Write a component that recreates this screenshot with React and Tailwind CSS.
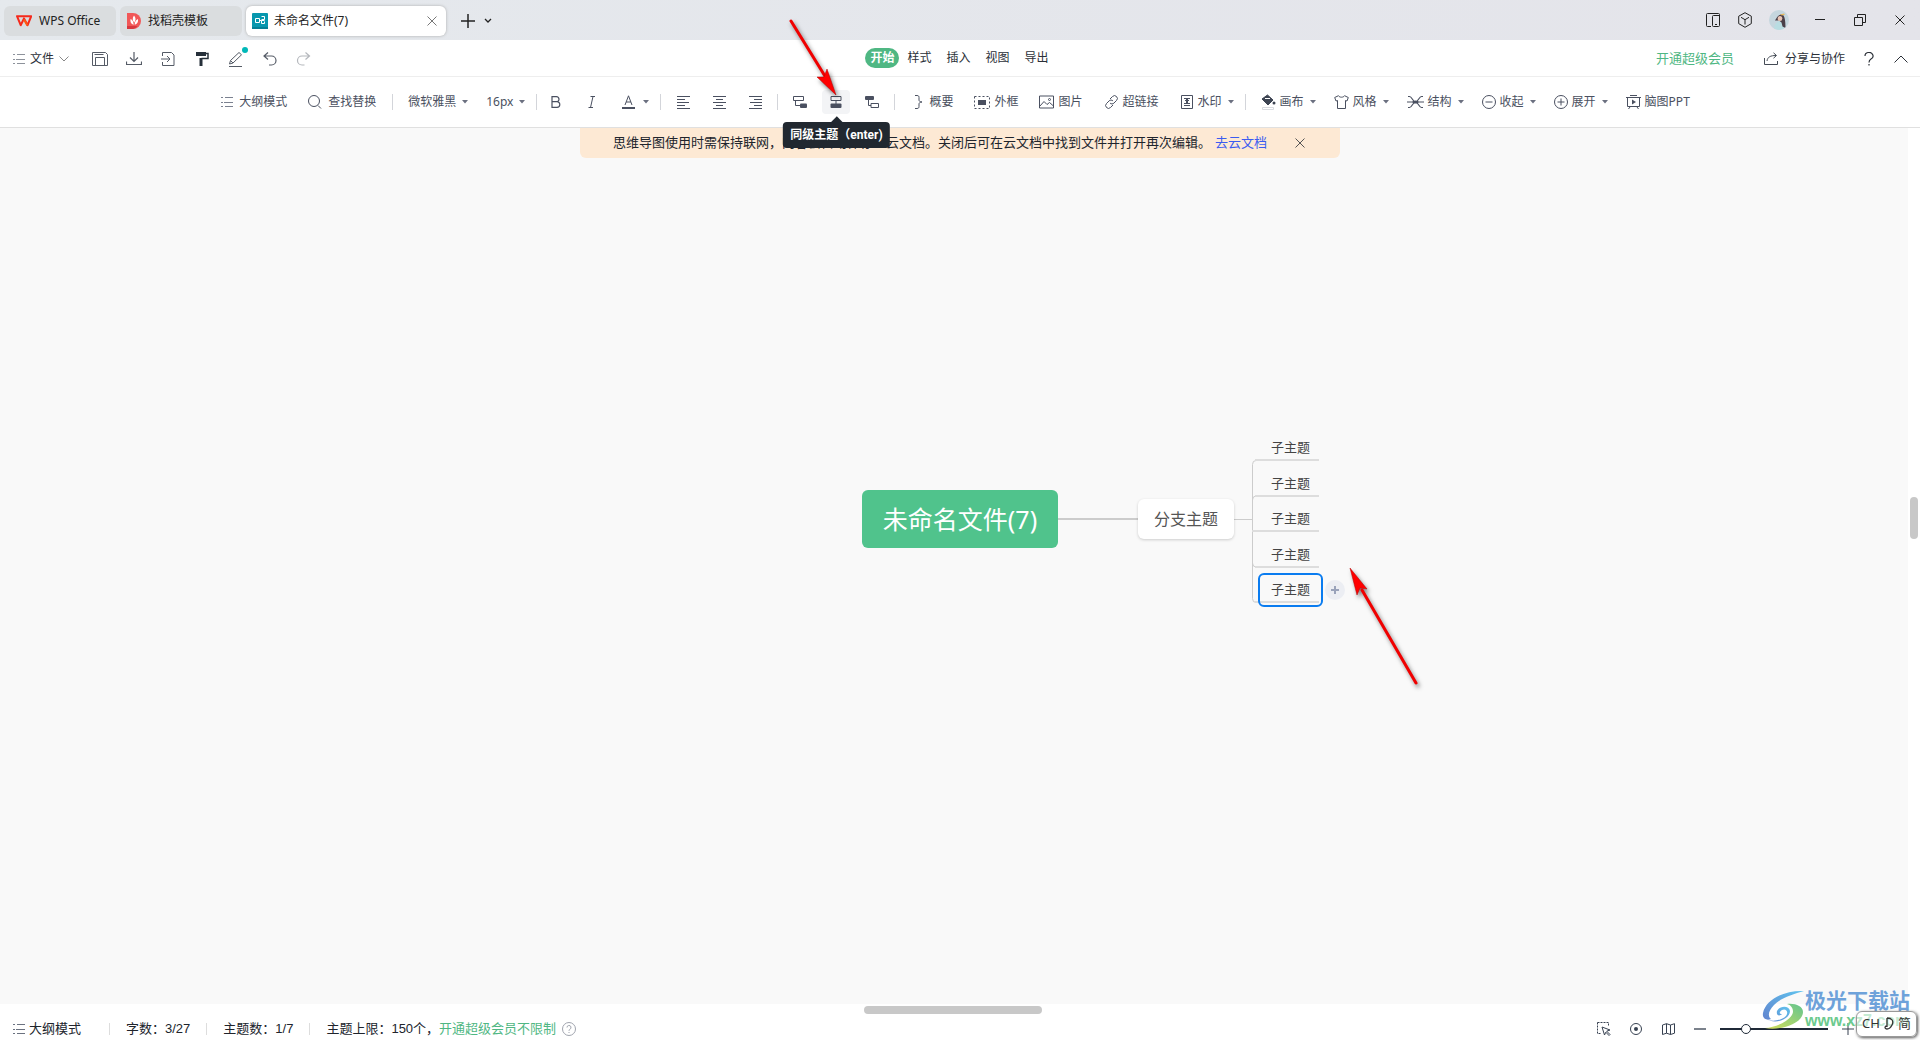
import React from 'react';

const Svg = ({ w = 16, h = 16, className = '', children }) => (
    <svg
        width={w}
        height={h}
        viewBox={`0 0 ${w} ${h}`}
        fill="none"
        stroke="currentColor"
        strokeWidth="1"
        aria-hidden="true"
        className={`shrink-0 ${className}`}
    >
        {children}
    </svg>
);

const ListIcon = ({ className }) => (
    <Svg w={12} h={12} className={className}>
        <path d="M0 1.5h2M4 1.5h8M0 6.5h2M3 6.5h9M0 10.5h2M4 10.5h8" />
    </Svg>
);

const Caret = () => (
    <Svg w={6} h={4} className="text-[#6b7080]">
        <path d="M0 0h6L3 3.5z" fill="currentColor" stroke="none" />
    </Svg>
);

const CloseIcon = ({ size = 10, className }) => (
    <Svg w={size} h={size} className={className}>
        <path d={`M.5 .5L${size - 0.5} ${size - 0.5}M${size - 0.5} .5L.5 ${size - 0.5}`} />
    </Svg>
);

// tight: follows a drop-down, whose caret already brings some space
const Divider = ({ tight }) => (
    <span className={`mr-[5px] h-4 w-px shrink-0 bg-[#d3d5da] ${tight ? 'ml-[3px]' : 'ml-[5px]'}`} />
);

const ToolButton = ({ icon, label, caret }) => (
    <button className={`flex h-6 shrink-0 items-center gap-1 pl-[10px] ${caret ? 'pr-2' : 'pr-[11px]'}`}>
        {icon}
        {label && <span>{label}</span>}
        {caret && <span className="pl-[2px]"><Caret /></span>}
    </button>
);

const IconButton = ({ label, active, children }) => (
    <button
        aria-label={label}
        className={`flex h-6 w-7 shrink-0 items-center justify-center rounded-sm ${active ? 'bg-[#f3f4f6]' : ''}`}
    >
        {children}
    </button>
);

const TitleBar = () => (
    <header className="flex h-10 items-center bg-linear-to-r from-[#e5e9ed] to-[#e4e4ea] pl-1 text-xs text-[#222]">
        <div className="flex items-center gap-1 pt-[2px]">
            <button className="flex h-[30px] w-28 items-center gap-[7px] rounded-md bg-[#dadddf] pl-3">
                <svg width="16" height="12" viewBox="0 0 16 12" aria-hidden="true">
                    <path d="M1 1.2h14.2L11.6 10.2 8 3.5 4.7 10.2 1 1.2z" fill="none" stroke="#f5291b" strokeWidth="2" strokeLinejoin="round" />
                    <path d="M8 4.5l3.4 6" stroke="#ff5b12" strokeWidth="2" />
                </svg>
                WPS Office
            </button>
            <button className="flex h-[30px] w-[122px] items-center gap-[7px] rounded-md bg-[#dadddf] pl-[7px]">
                <svg width="14" height="16" viewBox="0 0 14 16" aria-hidden="true">
                    <path d="M0 0h6a8 8 0 0 1 0 16H0z" fill="#f15757" />
                    <path d="M0 13h10.500a8 8 0 0 1-4.500 3H0z" fill="#d8383f" />
                    <path d="M7 2.500c2 2.500 2 4.500 .3 7c-2-2-2-4.500-.3-7zM3.500 6c2 1 3 2.500 3.200 5.800c-2.700-.8-3.700-2.800-3.200-5.800zM11 6c.5 3-.8 5-3.300 5.800c0-3 1-4.800 3.300-5.800z" fill="#fff" />
                </svg>
                找稻壳模板
            </button>
            <div className="flex h-[30px] w-[200px] items-center rounded-md bg-white pl-[6px] pr-[9px] shadow-[0_0_3px_#aaa]">
                <svg width="16" height="16" viewBox="0 0 16 16" aria-hidden="true">
                    <rect width="16" height="16" rx="1" fill="#0797ae" />
                    <path d="M0 14h16v2H0z" fill="#057f95" />
                    <path d="M3.500 5.500h4v4h-4zM7.500 7.500h2M9.500 3.500h3v3h-3M12.500 8.500v2h-3v-3h3" fill="none" stroke="#fff" />
                </svg>
                <span className="ml-[6px] flex-1">未命名文件(7)</span>
                <button aria-label="关闭标签"><CloseIcon className="text-[#777]" /></button>
            </div>
        </div>
        <button aria-label="新建" className="ml-[15px] pt-[2px]">
            <Svg w={14} h={14}><path d="M7 0v14M0 7h14" strokeWidth="1.500" /></Svg>
        </button>
        <button aria-label="标签列表" className="ml-[9px] pt-[2px]">
            <Svg w={8} h={6}><path d="M1 1l3 3 3-3" strokeWidth="1.300" /></Svg>
        </button>
        <div className="ml-auto flex items-center pr-[15px]">
            <button aria-label="分栏" className="mr-[18px]">
                <Svg w={14} h={14}>
                    <path d="M5 13.500H1.500a1 1 0 0 1-1-1v-11a1 1 0 0 1 1-1h11a1 1 0 0 1 1 1v11a1 1 0 0 1-1 1h-5a1 1 0 0 1-1-1v-9a1 1 0 0 1 1-1h6M9 11.500h2" />
                </Svg>
            </button>
            <button aria-label="应用" className="mr-[17px]">
                <Svg w={14} h={16}>
                    <path d="M7 .7l6.300 3.500v7.400L7 15.300.7 11.600V4.200zM3 5.300l4 2.400 4-2.400M7 7.700v4.800" />
                </Svg>
            </button>
            <button aria-label="账号" className="mr-[26px] size-5 overflow-hidden rounded-full">
                <svg width="20" height="20" viewBox="0 0 20 20">
                    <rect width="20" height="20" fill="#c5d6de" />
                    <path d="M5 20c0-5 3-9 7-9 3 0 3 5 3 9z" fill="#b9dde2" />
                    <path d="M6 10.500c2-3 3-6 7-6 3 1 3.500 7 3.500 13.500l-3-1.500-1-4-2.500-2z" fill="#4a3f48" />
                    <ellipse cx="11" cy="8.500" rx="2.300" ry="2.600" fill="#e8c4b4" />
                    <path d="M11 4.500l4-1 1 1-3 1z" fill="#e8b85a" />
                </svg>
            </button>
            <button aria-label="最小化" className="mr-[29px]"><Svg w={10} h={10}><path d="M0 4.500h10" /></Svg></button>
            <button aria-label="还原" className="mr-[29px]">
                <Svg w={12} h={12}><path d="M.5 3.500h8v8h-8zM3.500 3.500v-3h8v8h-3" /></Svg>
            </button>
            <button aria-label="关闭"><CloseIcon /></button>
        </div>
    </header>
);

const menus = ['样式', '插入', '视图', '导出'];

const MenuBar = () => (
    <div className="grid h-[37px] grid-cols-[1fr_auto_1fr] items-center border-b border-[#eeeeee] pl-[13px] pr-3 pt-[2px] text-xs text-[#2b3038]">
        <div className="flex items-center">
            <button className="flex items-center gap-[5px]">
                <ListIcon className="text-[#8d929b]" />
                文件
                <Svg w={10} h={6} className="text-[#888]"><path d="M.5 .5L5 5 9.500 .5" /></Svg>
            </button>
            <div className="ml-[23px] flex items-center gap-[18px] text-[#555b66]">
                <button aria-label="保存">
                    <Svg>
                        <path d="M.5 1.500h13l2 2v11H.5zM3.500 14.500v-8h9v8M2.500 3.500h9" />
                    </Svg>
                </button>
                <button aria-label="下载">
                    <Svg><path d="M8 1v9M4 6.500l4 4 4-4M.5 10.500v3h15v-3" strokeWidth="1.200" /></Svg>
                </button>
                <button aria-label="导入">
                    <Svg><path d="M2.500 5V1.500h9l2.500 2.500v10.500H2.500V11M1 8h9M7 5l3 3-3 3" /></Svg>
                </button>
                <button aria-label="格式刷" className="text-[#26303a]">
                    <Svg><path d="M12 2.500h2v5H7.500" strokeWidth="1.500" /><path d="M2 1h10v4H2zM5.500 7h3v8h-3z" fill="currentColor" stroke="none" /></Svg>
                </button>
                <button aria-label="画笔" className="relative">
                    <Svg><path d="M1.500 13l1-3.500L11 1.500l2.500 2.300L5 12zM2.500 9.500L5 12M1 15.500h13" /></Svg>
                    <span className="absolute -right-1 -top-1 size-[6px] rounded-full bg-[#00b8b8]" />
                </button>
                <button aria-label="撤销">
                    <Svg><path d="M6 1.500l-4 3.500 4 3.500M2 5h7.500a4 4 0 0 1 0 9H7" strokeWidth="1.200" /></Svg>
                </button>
                <button aria-label="重做" className="text-[#b4b7bc]">
                    <Svg><path d="M9.500 1.500l4 3.500-4 3.500M13.500 5H6a4 4 0 0 0 0 9h2.500" strokeWidth="1.200" /></Svg>
                </button>
            </div>
        </div>
        <nav className="flex items-center gap-px pb-[2px]">
            <button className="h-5 rounded-full bg-[#4fb783] px-[5px] font-bold text-white">开始</button>
            {menus.map((m) => (
                <button key={m} className="h-5 px-[7px]">{m}</button>
            ))}
        </nav>
        <div className="flex items-center justify-end">
            <a href="#vip" className="mr-[30px] text-[13px] text-[#4fb783]">开通超级会员</a>
            <button className="mr-[19px] flex items-center gap-[6px]">
                <Svg w={15} h={14} className="text-[#444b55]">
                    <path d="M.5 6v6.500h13V9M3 9c.5-4 3.500-5.500 9-5.500M9.500 .8l3 2.700-3 2.700" />
                </Svg>
                分享与协作
            </button>
            <button aria-label="帮助" className="mr-5">
                <Svg w={10} h={14}><path d="M1 4a4 3.500 0 1 1 6 3C5.500 8 5 8.500 5 10.500M5 12v1.500" strokeWidth="1.200" /></Svg>
            </button>
            <button aria-label="收起功能区">
                <Svg w={14} h={8}><path d="M.5 7.500L7 1l6.500 6.500" /></Svg>
            </button>
        </div>
    </div>
);

const AlignIcon = ({ d }) => <Svg w={13} h={13}><path d={d} /></Svg>;

const Toolbar = () => (
    <div className="flex h-[51px] items-center justify-center border-b border-[#e0e0e0] bg-white pr-2 text-xs text-[#4a5060]">
        <ToolButton icon={<span className="pr-[2px]"><ListIcon className="text-[#7b8190]" /></span>} label="大纲模式" />
        <ToolButton
            icon={<span className="pr-[2px]"><Svg w={14} h={14}><circle cx="6" cy="6" r="5.500" /><path d="M10 10.500l3 3" /></Svg></span>}
            label="查找替换"
        />
        <Divider />
        <ToolButton label="微软雅黑" caret />
        <ToolButton label="16px" caret />
        <Divider tight />
        <div className="flex gap-2">
            <IconButton label="加粗">
                <Svg w={10} h={12}><path d="M1 .7h4.500a2.500 2.500 0 0 1 0 5H1zM1 5.700h5a2.800 2.800 0 0 1 0 5.600H1z" strokeWidth="1.200" /></Svg>
            </IconButton>
            <IconButton label="倾斜">
                <Svg w={8} h={12}><path d="M2.500 .5H7M.5 11.500H5M5 .5L2.500 11.500" /></Svg>
            </IconButton>
            <button aria-label="字体颜色" className="flex h-6 items-center gap-2 pl-2 pr-[6px]">
                <Svg w={13} h={14}><path d="M3 10L6.500 .8 10 10M4.200 7h4.600" /><path d="M0 13h13" strokeWidth="2" /></Svg>
                <Caret />
            </button>
        </div>
        <Divider />
        <div className="flex gap-2 px-[3px]">
            <IconButton label="左对齐"><AlignIcon d="M0 .5h13M0 3.500h8M0 6.500h12M0 9.500h8M0 12.500h13" /></IconButton>
            <IconButton label="居中"><AlignIcon d="M0 .5h13M3 3.500h7M0 6.500h13M3 9.500h7M0 12.500h13" /></IconButton>
            <IconButton label="右对齐"><AlignIcon d="M0 .5h13M5 3.500h8M1 6.500h12M5 9.500h8M0 12.500h13" /></IconButton>
        </div>
        <Divider />
        <div className="flex gap-2 px-[3px]">
            <IconButton label="子主题">
                <Svg w={14} h={12}><path d="M.5 .5h10v4H.5zM2.500 4.500v5H7" /><rect x="7" y="7.500" width="7" height="4.500" rx="1" fill="currentColor" stroke="none" /></Svg>
            </IconButton>
            <div className="relative">
                <IconButton label="同级主题" active>
                    <Svg w={12} h={12}><path d="M1 .5h10v4H1zM6 4.500V8" /><rect y="7.500" width="11" height="4.500" x=".5" rx="1" fill="currentColor" stroke="none" /></Svg>
                </IconButton>
                <div role="tooltip" className="absolute left-1/2 top-8 z-20 -translate-x-1/2 whitespace-nowrap rounded-[4px] bg-[#212830] px-[7px] py-1 font-[Roboto,'Noto_Sans_CJK_SC',sans-serif] text-xs/[18px] font-bold text-white">
                    <span className="absolute -top-1 left-1/2 size-2 -translate-x-1/2 rotate-45 bg-[#212830]" />
                    同级主题（enter)
                </div>
            </div>
            <IconButton label="父主题">
                <Svg w={14} h={12}><rect width="9" height="4" rx="1" fill="currentColor" stroke="none" /><path d="M3.500 4v5.500H6M6 7.500h7.500v4H6z" /></Svg>
            </IconButton>
        </div>
        <Divider />
        <ToolButton
            icon={<span className="pl-[5px] pr-[2px]"><Svg w={8} h={14}><path d="M0 .5h2c1.500 0 2 .7 2 2v2.500c0 1.200 1 2 3 2-2 0-3 .8-3 2v2.500c0 1.300-.5 2-2 2H0" /></Svg></span>}
            label="概要"
        />
        <ToolButton
            icon={<Svg w={16} h={13}><path d="M.5 .5h15v12H.5z" strokeDasharray="2 2" /><rect x="4" y="4" width="8" height="5" fill="currentColor" stroke="none" /></Svg>}
            label="外框"
        />
        <ToolButton
            icon={<Svg w={15} h={14}><path d="M.5 1h14v12H.5zM1 11l4-4.500 3 3 2.500-2 4 3.500" /><circle cx="10.500" cy="4.500" r="1" /></Svg>}
            label="图片"
        />
        <ToolButton
            icon={<Svg w={15} h={14}><path d="M6 4l2.500-2.500a2.600 2.600 0 0 1 4 4L10 8a2.600 2.600 0 0 1-4 0M9 10l-2.500 2.500a2.600 2.600 0 0 1-4-4L5 6a2.600 2.600 0 0 1 4 0" /></Svg>}
            label="超链接"
        />
        <ToolButton
            icon={<Svg w={14} h={14}><path d="M1.500 .5h11v13h-11zM4 3.500h6M5 5.500h4M4 8.500h6M4 10.500h6" /><path d="M6 3.500h2v5H6z" fill="currentColor" stroke="none" /></Svg>}
            label="水印"
            caret
        />
        <Divider tight />
        <ToolButton
            icon={
                <Svg w={15} h={16}>
                    <path d="M1 5l5.500-4L12 6 7 11z" fill="#3d4452" stroke="#3d4452" />
                    <path d="M4 4.500h5" stroke="#fff" />
                    <circle cx="13" cy="9" r="1.500" fill="#3d4452" stroke="none" />
                    <path d="M1.500 13.500h11v2h-11z" stroke="#d9dbe0" />
                </Svg>
            }
            label="画布"
            caret
        />
        <ToolButton
            icon={<Svg w={15} h={14}><path d="M4.500 .7c1 2 5 2 6 0l3.800 1.800-1.300 3.500-1.500-.5v8h-8v-8L2 6 .7 2.500z" /></Svg>}
            label="风格"
            caret
        />
        <ToolButton
            icon={<Svg w={17} h={14}><path d="M1 1.500h1.500c2.500 0 3 5 6 5.500 3-.5 3.500-5.500 6-5.500H16M1 12.500h1.500c2.500 0 3-5 6-5.500 3 .5 3.500 5.500 6 5.500H16M0 7h17" strokeWidth="1.200" /><ellipse cx="8.500" cy="7" rx="3" ry="1.500" fill="currentColor" stroke="none" /></Svg>}
            label="结构"
            caret
        />
        <ToolButton icon={<Svg w={14} h={14}><circle cx="7" cy="7" r="6.500" /><path d="M3.500 7h7" /></Svg>} label="收起" caret />
        <ToolButton icon={<Svg w={14} h={14}><circle cx="7" cy="7" r="6.500" /><path d="M3.500 7h7M7 3.500v7" /></Svg>} label="展开" caret />
        <ToolButton
            icon={<Svg w={15} h={15}><path d="M4 .5h7M0 2.500h15M1.500 2.500v9h12v-9M4 12l-1.500 2M11 12l1.500 2" /><path d="M6 4.500v5L10 7z" fill="currentColor" stroke="none" /></Svg>}
            label="脑图PPT"
        />
    </div>
);

const Banner = () => (
    <div className="mx-auto flex h-[30px] w-[760px] items-center rounded-b-md bg-[#fde9d4] pl-[33px] text-[13px] text-[#20242c]">
        <p className="whitespace-nowrap">思维导图使用时需保持联网，内容会自动保存至云文档。关闭后可在云文档中找到文件并打开再次编辑。</p>
        <a href="#cloud" className="ml-1 shrink-0 text-[#3b5cf0]">去云文档</a>
        <button aria-label="关闭提示" className="ml-7 shrink-0"><CloseIcon className="text-[#555]" /></button>
    </div>
);

// tops are relative to the canvas, x matches the branch connector
const topics = [
    { id: 1, pos: 'top-[308px]' },
    { id: 2, pos: 'top-[344px]' },
    { id: 3, pos: 'top-[379px]' },
    { id: 4, pos: 'top-[415px]' },
    { id: 5, pos: 'top-[450px]' },
];

const MindMap = () => (
    <div className="absolute left-1/2 top-0 w-0">
        <svg className="absolute left-0 top-0" width="400" height="500" fill="none" aria-hidden="true">
            <path d="M98 391h80" stroke="#cccccc" strokeWidth="2" />
            <path d="M274 391.500h18M296 332.500q-3.500 0-3.500 4v134q0 4 3.500 4M292.500 372q0-4 3.500-4M292.500 435q0 4 3.500 4" stroke="#cccccc" />
            <path d="M295 332h64M295 368h64M292 403h67M295 439h64M295 474h64" stroke="#dddddd" strokeWidth="2" />
        </svg>
        <div className="absolute -left-[98px] top-[362px] flex h-[58px] w-[196px] items-center justify-center whitespace-nowrap rounded-md bg-[#50c38c] pt-[2px] text-[25px] text-white">
            未命名文件(7)
        </div>
        <div className="absolute left-[178px] top-[371px] flex h-10 w-24 items-center justify-center whitespace-nowrap rounded-md bg-white text-base text-[#555] shadow-[0_1px_3px_rgba(0,0,0,0.18)]">
            分支主题
        </div>
        {topics.map((t) => (
            <div key={t.id} className={`absolute left-[311px] w-[39px] whitespace-nowrap text-[13px]/[22px] text-[#444] ${t.pos}`}>
                子主题
            </div>
        ))}
        <div className="absolute left-[298px] top-[445px] h-[34px] w-[65px] rounded-md border-2 border-[#0a7cf0]" />
        <button aria-label="添加主题" className="absolute left-[365px] top-[452px] flex size-5 items-center justify-center rounded-full bg-[#eceef3] text-[#9aa3ba]">
            <Svg w={8} h={8}><path d="M4 0v8M0 4h8" strokeWidth="2" /></Svg>
        </button>
    </div>
);

// red pointer: a line from its tail and a separate head at its tip
const Pointer = ({ className, w, h, line, head }) => (
    <svg width={w} height={h} className={`pointer-events-none absolute z-30 overflow-visible drop-shadow-[2px_3px_2px_rgba(0,0,0,0.5)] ${className}`} aria-hidden="true">
        <path d={line} stroke="#f00000" strokeWidth="3" strokeLinecap="round" />
        <path d={head} fill="#ff0000" stroke="#b00000" strokeWidth=".5" />
    </svg>
);

const StatusBar = () => (
    <footer className="flex h-9 items-center bg-white pl-[13px] pr-[66px] pt-[14px] font-['Liberation_Sans','Noto_Sans_CJK_SC',sans-serif] text-[13px]/[20px] text-[#20242c]">
        <button className="flex items-center gap-1">
            <ListIcon className="text-[#6b7280]" />
            大纲模式
        </button>
        <span className="ml-7 mr-4 h-3 w-px bg-[#dddddd]" />
        <span>字数：3/27</span>
        <span className="mx-4 h-3 w-px bg-[#dddddd]" />
        <span>主题数：1/7</span>
        <span className="mx-4 h-3 w-px bg-[#dddddd]" />
        <span>主题上限：150个，</span>
        <a href="#vip" className="text-[#4fb783]">开通超级会员不限制</a>
        <button aria-label="说明" className="ml-[6px] text-[#a0a4ae]">
            <Svg w={14} h={14}><circle cx="7" cy="7" r="6.500" /><path d="M5 5.500a2 2 0 1 1 2.800 1.800Q7 7.700 7 8.800M7 10v1" /></Svg>
        </button>
        <div className="ml-auto flex items-center text-[#374151]">
            <button aria-label="框选" className="mr-[19px]">
                <Svg w={14} h={14}><path d="M.5 .5h11v4M.5 .5v11h4" strokeDasharray="2 1" /><path d="M5 5l8 3-3.300 1.200L13 12.500l-1 1-3.200-3.300L7.500 13z" /></Svg>
            </button>
            <button aria-label="定位" className="mr-5">
                <Svg w={12} h={12}><circle cx="6" cy="6" r="5.500" /><circle cx="6" cy="6" r="2" fill="currentColor" stroke="none" /></Svg>
            </button>
            <button aria-label="缩略图" className="mr-[19px]">
                <Svg w={13} h={12}><path d="M.5 2L4.500 .7 8.500 2 12.500 .7v9.500L8.500 11.500 4.500 10.200 .5 11.500zM4.500 .7v9.500M8.500 2v9.500" /></Svg>
            </button>
            <button aria-label="缩小" className="mr-[14px] text-[#7b828c]"><Svg w={12} h={12}><path d="M0 6h12" strokeWidth="2" /></Svg></button>
            <input
                type="range"
                aria-label="缩放比例"
                min="0"
                max="100"
                defaultValue="21"
                className="h-[10px] w-[108px] appearance-none bg-transparent [&::-webkit-slider-runnable-track]:h-[2px] [&::-webkit-slider-runnable-track]:bg-[#1f2937] [&::-webkit-slider-thumb]:-mt-1 [&::-webkit-slider-thumb]:size-[10px] [&::-webkit-slider-thumb]:appearance-none [&::-webkit-slider-thumb]:rounded-full [&::-webkit-slider-thumb]:border [&::-webkit-slider-thumb]:border-[#1f2937] [&::-webkit-slider-thumb]:bg-white"
            />
            <button aria-label="放大" className="ml-[14px]"><Svg w={12} h={12}><path d="M6 0v12M0 6h12" /></Svg></button>
        </div>
    </footer>
);

const Watermark = () => (
    <div className="pointer-events-none absolute bottom-[9px] right-[10px] z-10 flex items-center">
        <svg width="43" height="40" viewBox="0 0 43 40" aria-hidden="true">
            <defs>
                <linearGradient id="swooshBlue" x1="0" y1="1" x2="1" y2="0">
                    <stop offset="0" stopColor="#6285cf" />
                    <stop offset="1" stopColor="#5fc3ee" />
                </linearGradient>
                <linearGradient id="swooshGreen" x1="0" y1="1" x2="1" y2="0">
                    <stop offset="0" stopColor="#d6df5a" />
                    <stop offset="1" stopColor="#62c48f" />
                </linearGradient>
            </defs>
            <path d="M42 1C25 0 4 8 1 23c-1 5 3 8 8 6-4-3-2-9 3-14C19 8 31 4 42 1z" fill="url(#swooshBlue)" />
            <path d="M4 29c5 3 15 2 20-3 3-4 0-8-4-6-3 2-3 4 0 4-3 3-6 1-5-3 2-5 12-6 13 0 0 8-14 14-24 8z" fill="url(#swooshBlue)" />
            <path d="M25 14c8-1 16 2 16 8C41 33 20 41 3 38c12-1 27-8 28-16 0-4-2-7-6-8z" fill="url(#swooshGreen)" />
        </svg>
        <div className="whitespace-nowrap">
            <div className="text-[21px]/[22px] font-bold text-[#6ea2da]">极光下载站</div>
            <div className="font-['Liberation_Sans',sans-serif] text-base/[20px] font-bold text-[#6cca8e]">www.xz7.com</div>
        </div>
    </div>
);

export default function App() {
    return (
        <div className="relative flex h-screen flex-col overflow-hidden bg-white font-['Noto_Sans','Noto_Sans_CJK_SC',sans-serif]">
            <TitleBar />
            <MenuBar />
            <Toolbar />
            <div className="flex min-h-0 flex-1">
                <main className="relative min-w-0 flex-1 bg-[#f9f9f9]">
                    {/* the banner is centred on the window, not on the canvas */}
                    <div className="-mr-3"><Banner /></div>
                    <div className="absolute inset-y-0 left-0 -right-3"><MindMap /></div>
                </main>
                <div className="flex w-3 items-center justify-center">
                    <div className="relative -top-12 h-[42px] w-2 rounded-full bg-[#c8c8c8]" />
                </div>
            </div>
            <div className="relative">
                <div className="absolute left-[45%] top-[2px] h-2 w-[178px] rounded-full bg-[#c8c8c8]" />
                <StatusBar />
            </div>
            <Watermark />
            <div className="absolute bottom-[3px] right-[3px] z-20 flex h-[26px] w-[61px] items-center justify-center gap-1 rounded-md border border-[#999] bg-white/60 text-[13px] text-[#333] shadow-[1px_1px_3px_#555]">
                CH
                <Svg w={10} h={14}><path d="M3 1v9M3 1c5 0 7 3 5 7-1 2-3 4-5 4a2 1.500 0 1 1 0-3" strokeWidth="1.300" /></Svg>
                简
            </div>
            <Pointer className="left-[790px] top-5" w={48} h={78} line="M1 1L38 61" head="M46 75L27 57L34 57L37 49Z" />
            <Pointer className="left-[1350px] top-[568px]" w={68} h={118} line="M66 115L12 22" head="M0 0L17 21L10 20L7 27Z" />
        </div>
    );
}
